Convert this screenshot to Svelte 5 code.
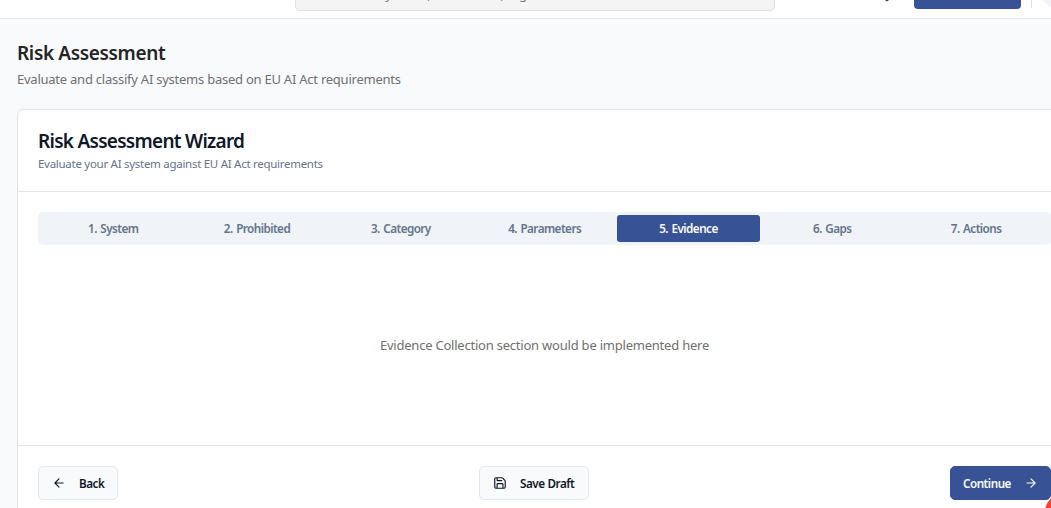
<script>
  const steps = ['System', 'Prohibited', 'Category', 'Parameters', 'Evidence', 'Gaps', 'Actions'];
  let active = $state(4);
</script>

<div class="app">
  <header>
    <div class="search"><span>Search systems, documents, regulations...</span></div>
    <div class="tools">
      <svg class="bell" viewBox="0 0 24 24" width="18" height="18"><path d="M6 8a6 6 0 0 1 12 0c0 7 3 9 3 9H3s3-2 3-9M10.3 21a1.94 1.94 0 0 0 3.4 0" /></svg>
      <button class="new" aria-label="New"></button>
      <i class="divider"></i>
      <i class="avatar"></i>
    </div>
  </header>
  <main>
    <h1><span>Risk Assessment</span></h1>
    <p class="lead"><span>Evaluate and classify AI systems based on EU AI Act requirements</span></p>
    <section class="card">
      <div class="head">
        <h2><span>Risk Assessment Wizard</span></h2>
        <p><span>Evaluate your AI system against EU AI Act requirements</span></p>
      </div>
      <div class="body">
        <nav>
          {#each steps as step, i}
            <button class:active={i === active} onclick={() => (active = i)}>{i + 1}. {step}</button>
          {/each}
        </nav>
        <div class="empty"><span>Evidence Collection section would be implemented here</span></div>
      </div>
      <footer>
        <button class="btn back">
          <svg viewBox="0 0 24 24" width="14" height="14"><path d="m12 19-7-7 7-7M19 12H5" /></svg>
          <span>Back</span>
        </button>
        <button class="btn save">
          <svg viewBox="0 0 24 24" width="14" height="14"><path d="M15.2 3a2 2 0 0 1 1.4.6l3.8 3.8a2 2 0 0 1 .6 1.4V19a2 2 0 0 1-2 2H5a2 2 0 0 1-2-2V5a2 2 0 0 1 2-2zM17 21v-7a1 1 0 0 0-1-1H8a1 1 0 0 0-1 1v7M7 3v4a1 1 0 0 0 1 1h7" /></svg>
          <span>Save Draft</span>
        </button>
        <button class="btn next">
          <span>Continue</span>
          <svg viewBox="0 0 24 24" width="14" height="14"><path d="M5 12h14M12 5l7 7-7 7" /></svg>
        </button>
      </footer>
    </section>
  </main>
  <i class="fab"></i>
</div>

<style>
  :global(body) { overflow: hidden; }
  * { box-sizing: border-box; }
  .app {
    position: relative;
    width: 1051px;
    height: 508px;
    overflow: hidden;
    background: #f9fafc;
    color: #242424;
    font-family: "Segoe UI", "Noto Sans", sans-serif;
  }
  h1, h2, p { margin: 0; }
  h1, h2, p, .empty, .btn, nav button, .search { white-space: nowrap; }
  button { font-family: inherit; border: 0; padding: 0; margin: 0; }
  svg { fill: none; stroke: currentColor; stroke-width: 2; stroke-linecap: round; stroke-linejoin: round; flex: none; }
  header {
    display: flex;
    align-items: flex-end;
    height: 19px;
    padding-left: 295px;
    background: #fff;
    border-bottom: 1px solid #e3e4e6;
  }
  .search {
    display: flex;
    flex: none;
    align-items: center;
    width: 480px;
    height: 33px;
    margin-bottom: 7px;
    padding: 0 0 2px 40px;
    border: 1px solid #e0e0e0;
    border-radius: 5px;
    background: #f4f4f4;
    color: #707580;
    font-size: 13px;
    letter-spacing: -0.2px;
  }
  .tools { display: flex; flex: none; align-items: flex-end; margin-left: 103px; }
  .bell { margin-bottom: 16px; color: #303040; }
  .new { width: 107px; height: 32px; margin: 0 10px 9px 18px; border-radius: 4px; background: #375396; }
  .divider { width: 1px; height: 24px; margin-bottom: 10px; background: #e0e0e0; }
  .avatar { width: 32px; height: 32px; margin: 0 0 10px 9px; flex: none; border-radius: 50%; background: #f0f3f9; }
  main { width: 1072px; padding: 20px 0 0 17px; }
  h1 { font-size: 19px; line-height: 28px; font-weight: 600; letter-spacing: -0.35px; }
  .lead { margin-top: 3px; font-size: 13px; line-height: 18px; color: #707070; letter-spacing: -0.24px; }
  .card {
    width: 1055px;
    height: 420px;
    margin-top: 21px;
    border: 1px solid #e2e3e6;
    border-radius: 6px;
    background: #fff;
    color: #0f172a;
  }
  .head { height: 82px; padding: 18px 20px 0; border-bottom: 1px solid #e2e5ec; }
  h2 { font-size: 19px; line-height: 26px; font-weight: 600; letter-spacing: -0.72px; }
  .head p { font-size: 11.5px; line-height: 18px; margin-top: 1px; color: #64748b; letter-spacing: -0.28px; }
  .body { height: 254px; padding: 20px 20px 0; border-bottom: 1px solid #e2e5ee; }
  nav {
    display: grid;
    grid-template-columns: repeat(7, 1fr);
    height: 33px;
    padding: 3px 3px 3px 3.3px;
    border-radius: 5px;
    background: #f0f3f8;
  }
  nav button {
    border-radius: 3px;
    background: transparent;
    color: #64748b;
    font-size: 11.7px;
    font-weight: 600;
    line-height: 27px;
    letter-spacing: -0.55px;
    word-spacing: 1px;
  }
  nav button.active { background: #375396; color: #f8fafc; }
  .empty { padding-top: 90px; text-align: center; font-size: 13px; line-height: 20px; color: #707070; letter-spacing: -0.22px; }
  footer { display: flex; justify-content: space-between; padding: 20px; }
  .btn {
    display: flex;
    align-items: center;
    height: 34px;
    border: 1px solid #e2e8f0;
    border-radius: 5px;
    background: #f9fafc;
    color: #0f172a;
    font-size: 11.7px;
    font-weight: 600;
    letter-spacing: -0.5px;
    word-spacing: 0.5px;
  }
  .back { width: 80px; gap: 13px; padding-left: 13px; }
  .save { width: 110px; gap: 13px; padding-left: 13px; }
  .next { width: 101px; justify-content: space-between; padding: 0 12px; border-color: #375396; background: #375396; color: #f8fafc; }
  .fab {
    position: absolute;
    left: 1045px;
    top: 494px;
    width: 36px;
    height: 36px;
    border-radius: 50%;
    background: #f44336;
  }
</style>
